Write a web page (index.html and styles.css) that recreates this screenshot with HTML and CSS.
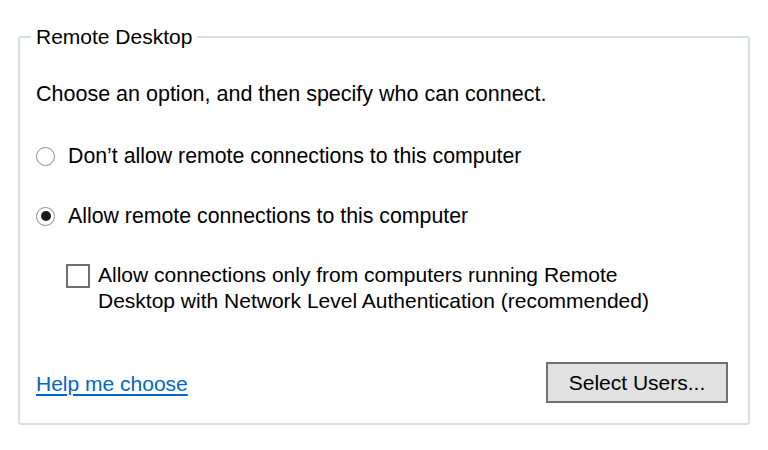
FILE: index.html
```html
<!DOCTYPE html>
<html lang="en">
<head>
<meta charset="utf-8">
<title>Remote Desktop</title>
<link rel="stylesheet" href="styles.css">
</head>
<body>
<div class="group">
  <div class="group-title">Remote Desktop</div>
  <p class="intro">Choose an option, and then specify who can connect.</p>
  <label class="option opt-first"><span class="radio"></span><span>Don’t allow remote connections to this computer</span></label>
  <label class="option opt-second"><span class="radio checked"></span><span>Allow remote connections to this computer</span></label>
  <label class="check-row"><span class="checkbox"></span><span class="check-text">Allow connections only from computers running Remote<br>Desktop with Network Level Authentication (recommended)</span></label>
  <div class="footer">
    <a class="help" href="#">Help me choose</a>
    <button class="btn" type="button">Select Users...</button>
  </div>
</div>
</body>
</html>
```
FILE: styles.css
```css
html, body {
  margin: 0;
  padding: 0;
  background: #ffffff;
}
body {
  font-family: "Liberation Sans", Arial, sans-serif;
  font-size: 21px;
  line-height: 24px;
  color: #000000;
}
.group {
  position: relative;
  margin: 36px 18px 0 18px;
  border: 2px solid #d5dfe5;
  border-radius: 3px;
  padding: 44px 20px 20px 16px;
  box-sizing: content-box;
  display: flex;
  flex-direction: column;
  height: 321px;
}
.group-title {
  position: absolute;
  top: -13px;
  left: 11px;
  padding: 0 5px;
  background: #ffffff;
  line-height: 24px;
}
.intro {
  margin: 0;
  font-size: 21.5px;
}
.option {
  display: flex;
  align-items: center;
  gap: 13px;
  font-size: 21.3px;
}
.opt-first { margin-top: 38px; }
.opt-second { margin-top: 36px; }
.radio {
  width: 19px;
  height: 19px;
  box-sizing: border-box;
  border: 1.5px solid #8c8c8c;
  border-radius: 50%;
  display: flex;
  align-items: center;
  justify-content: center;
  flex: none;
}
.radio.checked::after {
  content: "";
  width: 10px;
  height: 10px;
  border-radius: 50%;
  background: #1a1a1a;
}
.check-row {
  display: flex;
  align-items: flex-start;
  gap: 8px;
  margin-top: 34px;
  margin-left: 30px;
}
.checkbox {
  width: 24px;
  height: 24px;
  box-sizing: border-box;
  border: 2px solid #707070;
  margin-top: 2px;
  flex: none;
}
.check-text {
  line-height: 26px;
}
.footer {
  margin-top: auto;
  display: flex;
  align-items: center;
  justify-content: space-between;
}
.help {
  color: #0066cc;
  text-decoration: underline;
  text-underline-offset: 3px;
  margin-top: 3px;
}
.btn {
  width: 182px;
  height: 41px;
  border: 2px solid #707070;
  background: #e1e1e1;
  font-family: inherit;
  font-size: 21px;
  color: #000000;
  padding: 0;
  border-radius: 0;
}
```
